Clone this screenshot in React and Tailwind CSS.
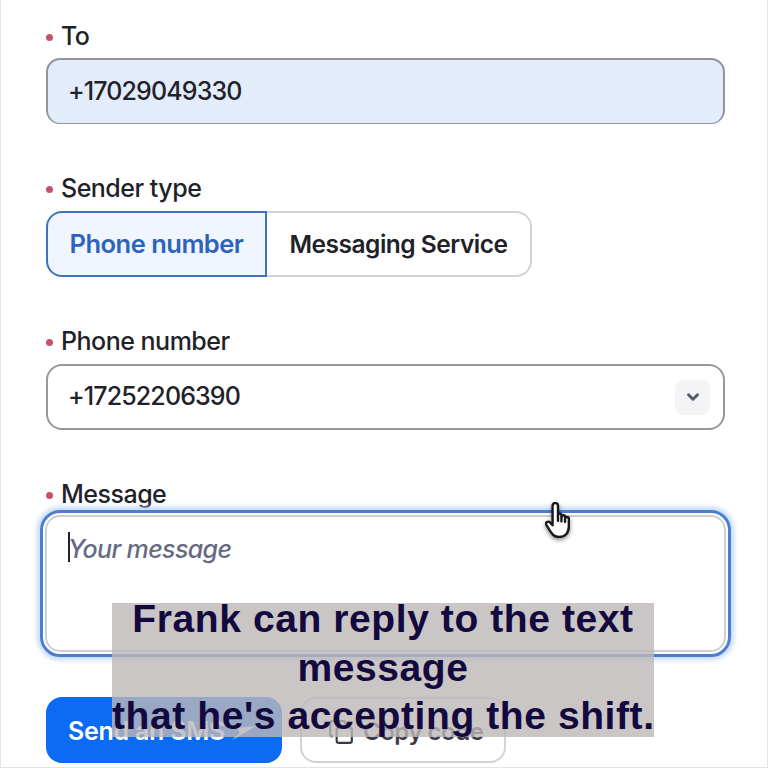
import { ChevronDown, Copy } from "lucide-react";

const Label = ({ children }) => (
    <div className="flex items-center h-[34px] pt-[4px] text-[25px] font-[450] tracking-[-0.02em] text-[#1f2229]">
        <span className="w-[7px] h-[7px] rounded-full bg-[#c9506a] mr-[8px]" />
        <span>{children}</span>
    </div>
);

const HandCursor = () => (
    <svg
        width="26"
        height="36"
        viewBox="0 0 24 34"
        preserveAspectRatio="none"
        fill="white"
        stroke="#17181c"
        strokeWidth="2.2"
        strokeLinecap="round"
        strokeLinejoin="round"
        className="absolute left-[544px] top-[502px] drop-shadow-[0_2px_2px_rgba(0,0,0,0.45)]"
    >
        <path d="M7 3.2C7 .2 12 .2 12 3.2V12.5C12 10.5 15.2 10.5 15.2 12.7V14C15.2 12 18.5 12 18.5 14.2V15.5C18.5 13.7 22 13.7 22 15.8V23C22 29 19 33 13 33C8 33 6.5 30 4.5 27L1.2 21.5C0 19 3 17.5 4.8 19.5L7 22Z" />
        <path d="M12 12.5V18M15.2 14V18.5M18.5 15.5V19" />
    </svg>
);

const App = () => {
    return (
        <div className="relative h-[768px] w-[768px] overflow-hidden bg-white border-l border-r border-b border-[#e4e4e6] font-['Inter',sans-serif]">
            <div className="flex flex-col px-[45px] pt-[18px]">
                {/* To */}
                <Label>To</Label>
                <div className="mt-[6px] flex items-center h-[66px] w-[679px] rounded-[14px] bg-[#e2ecfb] border-2 border-b border-[#92949c] pl-[20px] text-[25px] font-[450] tracking-[-0.035em] text-[#1f2229]">
                    +17029049330
                </div>

                {/* Sender type */}
                <div className="mt-[46px]">
                    <Label>Sender type</Label>
                </div>
                <div className="mt-[7px] flex h-[66px] w-[486px] font-semibold">
                    <div className="flex items-center justify-center w-[221px] rounded-l-[16px] bg-[#f1f6fe] border-2 border-[#3f74bd] text-[25.5px] tracking-[-0.02em] text-[#2c63bd]">
                        Phone number
                    </div>
                    <div className="flex items-center justify-center flex-1 rounded-r-[16px] border-2 border-l-0 border-[#d2d3d6] text-[24.5px] tracking-[-0.02em] text-[#1f2229]">
                        Messaging Service
                    </div>
                </div>

                {/* Phone number */}
                <div className="mt-[46px]">
                    <Label>Phone number</Label>
                </div>
                <div className="mt-[7px] flex items-center justify-between h-[66px] w-[679px] rounded-[16px] border-2 border-[#97989e] pl-[20px] pr-[13px] text-[25px] font-[450] tracking-[-0.035em] text-[#1f2229]">
                    <span>+17252206390</span>
                    <span className="flex items-center justify-center w-[35px] h-[35px] rounded-[8px] bg-[#f4f4f7]">
                        <ChevronDown size={18} strokeWidth={4} className="text-[#565a6c]" />
                    </span>
                </div>

                {/* Message */}
                <div className="mt-[46px]">
                    <Label>Message</Label>
                </div>
                <div className="-ml-[6px] w-[691px] h-[147px] rounded-[20px] border-[3px] border-[#4a7fd0] shadow-[0_0_5px_3px_#c3d9f6] p-[2px]">
                    <div className="flex items-start h-full rounded-[15px] border-2 border-[#cfcfd2] pl-[21px] pt-[15px] text-[25px] leading-[34px]">
                        <span className="w-[2px] h-[30px] -mr-[2px] bg-[#1f2229]" />
                        <span className="italic font-medium tracking-[-0.025em] text-[#666b82]">Your message</span>
                    </div>
                </div>

                {/* Actions */}
                <div className="mt-[40px] flex gap-[18px] font-semibold">
                    <button className="flex items-center h-[66px] w-[236px] rounded-[16px] bg-[#0b6bf5] pl-[22px] pt-[3px] text-[25px] tracking-[-0.01em] text-white">
                        Send an SMS
                        <svg width="26" height="16" viewBox="0 0 26 16" className="ml-[6px] mt-[2px]" fill="#e6effd">
                            <path d="M1 15L25 1L6 3L9 8Z" />
                        </svg>
                    </button>
                    <button className="flex items-center gap-[9px] h-[66px] w-[206px] rounded-[16px] border-2 border-[#d2d3d6] pl-[26px] pt-[3px] text-[24px] tracking-[-0.02em] text-[#3a3b44]">
                        <Copy size={26} />
                        Copy code
                    </button>
                </div>
            </div>

            <HandCursor />

            {/* Caption */}
            <div className="absolute left-[111px] top-[603px] w-[542px] h-[134px] bg-[#bdb8b8]/80">
                <div className="-mt-[8px] text-center font-['Liberation_Sans',sans-serif] font-bold text-[39px] leading-[48.5px] tracking-[0.015em] whitespace-nowrap text-[#14093f]">
                    Frank can reply to the text
                    <br />
                    message
                    <br />
                    that he's accepting the shift.
                </div>
            </div>
        </div>
    );
};

export default App;
